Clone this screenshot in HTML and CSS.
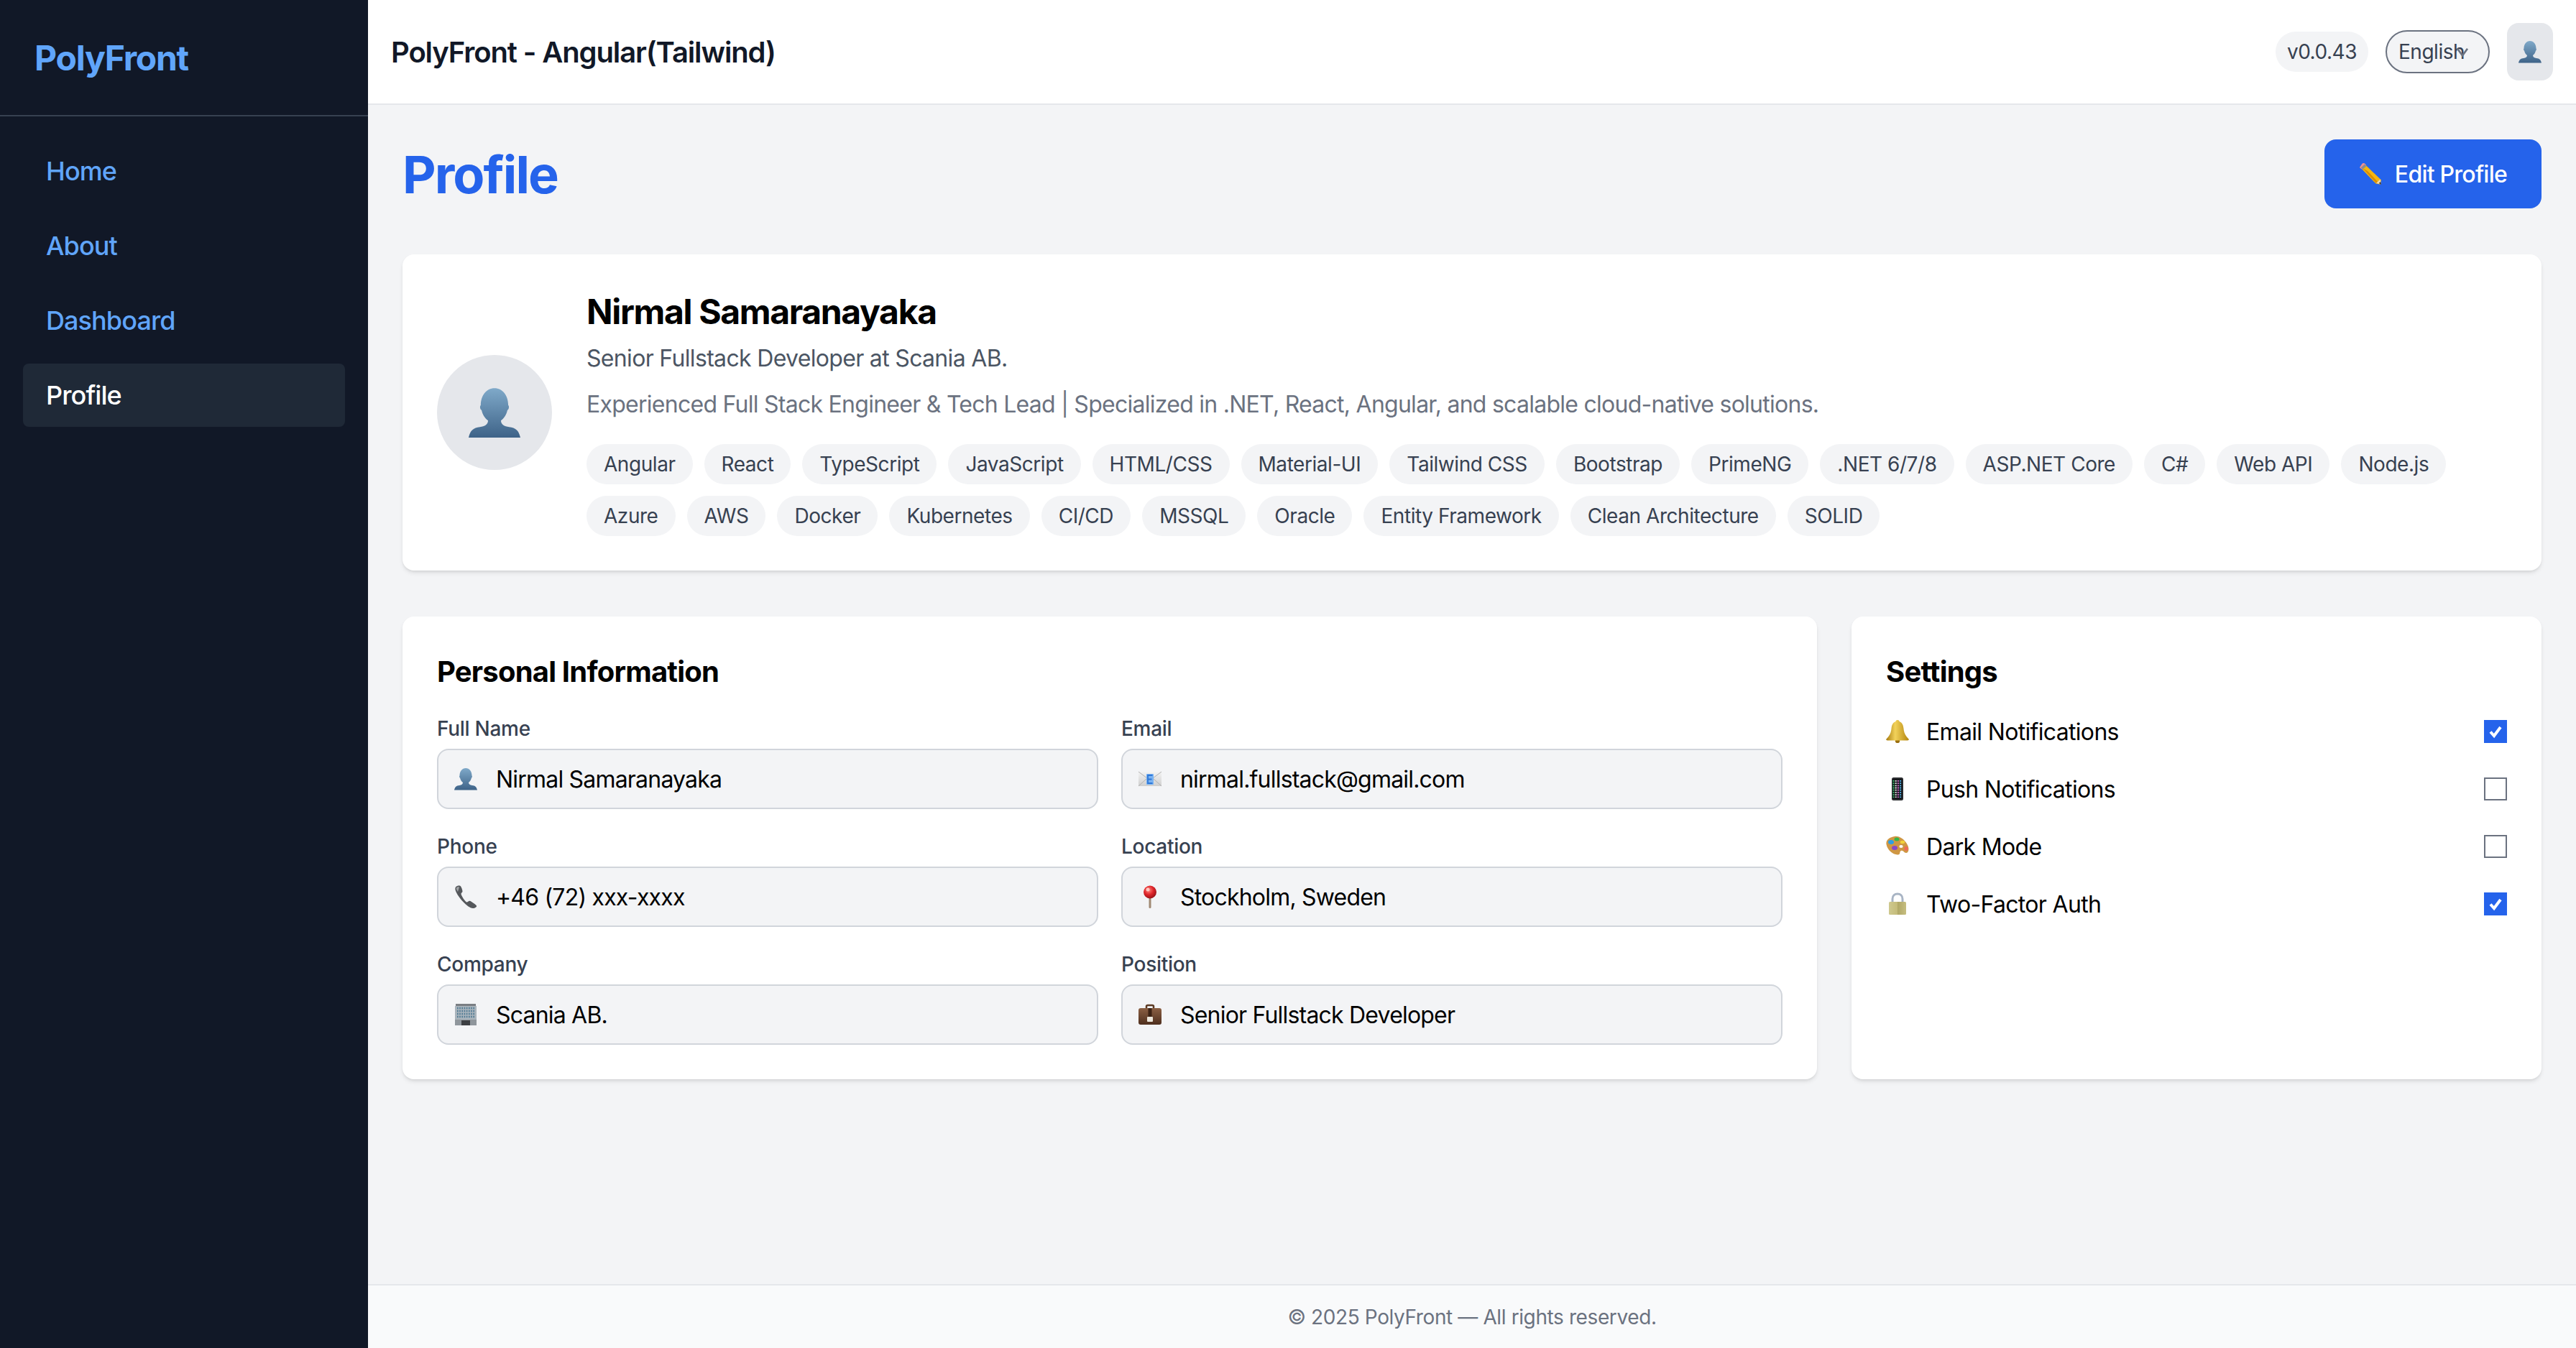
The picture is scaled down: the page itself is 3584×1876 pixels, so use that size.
FILE: index.html
```html
<!DOCTYPE html>
<html lang="en">
<head>
<meta charset="utf-8">
<title>PolyFront - Angular(Tailwind)</title>
<link rel="stylesheet" href="styles.css">
</head>
<body>
<svg class="defs" aria-hidden="true">
  <defs>
    <linearGradient id="gPerson" x1="0" y1="0" x2="0" y2="1"><stop offset="0" stop-color="#7fa9c9"/><stop offset="1" stop-color="#3e6388"/></linearGradient>
    <linearGradient id="gBell" x1="0" y1="0" x2="1" y2="0"><stop offset="0" stop-color="#a87c10"/><stop offset=".4" stop-color="#f2d25a"/><stop offset="1" stop-color="#b4860f"/></linearGradient>
    <linearGradient id="gLock" x1="0" y1="0" x2="1" y2="0"><stop offset="0" stop-color="#cfc98f"/><stop offset=".5" stop-color="#c4bb79"/><stop offset=".5" stop-color="#b0a766"/><stop offset="1" stop-color="#c6be80"/></linearGradient>
    <linearGradient id="gCase" x1="0" y1="0" x2="0" y2="1"><stop offset="0" stop-color="#8a5f43"/><stop offset="1" stop-color="#4f2f1e"/></linearGradient>
    <linearGradient id="gEnv" x1="0" y1="0" x2="0" y2="1"><stop offset="0" stop-color="#f3f3f3"/><stop offset="1" stop-color="#cfcfcf"/></linearGradient>
    <radialGradient id="gPin" cx=".4" cy=".35" r=".7"><stop offset="0" stop-color="#ff8a80"/><stop offset=".5" stop-color="#e0262b"/><stop offset="1" stop-color="#8f1015"/></radialGradient>
    <symbol id="i-person" viewBox="0 0 32 32">
      <path fill="url(#gPerson)" d="M0 31.500C1 27 3 25.500 7 25C10 24.500 12 23.500 12 21C10 19.500 8.500 17 8 14.500C7 14 6.800 12 7.500 11.500C7.500 5.500 11 1 16 1C21 1 24.500 5.500 24.500 11.500C25.200 12 25 14 24 14.500C23.500 17 22 19.500 20 21C20 23.500 22 24.500 25 25C29 25.500 31 27 32 31.500Z"/>
    </symbol>
    <symbol id="i-pencil" viewBox="0 0 32 32">
      <path fill="#f6b60f" d="M7 1.500L31 24.500L29.500 30.500L23.500 29.500L1.500 6.500Z"/>
      <path fill="#d98d06" d="M5 8L24 29L29.500 30.500L12 12Z"/>
      <path fill="#ef8f92" d="M1 7L4 2.500C5 1 7 .500 8.500 2L10 3.500L4 9.500L2 8Z"/>
      <path fill="#8d8d8d" d="M2.800 7.300L8 2.500L10.500 5L5.200 9.800Z"/>
      <path fill="#f0d9b0" d="M24 29L29.500 23.500L31 30.500Z"/>
      <path fill="#222" d="M28 29L30 27L31 31Z"/>
    </symbol>
    <symbol id="i-mail" viewBox="0 0 32 32">
      <rect x="0" y="6" width="32" height="20" fill="url(#gEnv)"/>
      <path fill="none" stroke="#b0b0b0" stroke-width="1" d="M0 6L16 18L32 6M0 26L12 15M32 26L20 15"/>
      <rect x="11" y="9" width="10" height="15" rx="1" fill="#7ab3f2"/>
      <path fill="none" stroke="#2f78d8" stroke-width="1.800" d="M19.500 11H13V22H19.500M13 16.500H18.500"/>
    </symbol>
    <symbol id="i-phone" viewBox="0 0 32 32">
      <path fill="#55585c" d="M2 2.500C4 .500 7 0 8.500 1C10 2 11.500 7 11.500 8.500C11.500 10 9.500 10.500 9.500 12C9.500 14 15 22.500 17 23.500C18.500 24 20 21.500 21.500 21.800C23.500 22.300 30 27 31 28.500C31.800 30 29 32 26 32C18 31.500 5 16 2 8C1.300 6 1 4 2 2.500Z"/>
      <path fill="#a0a3a6" d="M3 3.500C4 2.500 6 1.800 7 2.500L5 9C3.500 7 2.500 5 3 3.500Z"/>
    </symbol>
    <symbol id="i-pin" viewBox="0 0 32 32">
      <rect x="14.500" y="16" width="3" height="16" rx="1.500" fill="#a08a74"/>
      <circle cx="16" cy="9.500" r="9" fill="url(#gPin)"/>
      <circle cx="13" cy="6" r="2.500" fill="#ffc7c0"/>
    </symbol>
    <symbol id="i-building" viewBox="0 0 32 32">
      <rect x="2" y="1" width="28" height="4" fill="#7a7e83"/>
      <rect x="1" y="4" width="30" height="27" fill="#a9b4bc"/>
      <path stroke="#4f7a94" stroke-width="2.400" stroke-dasharray="1.600 1.600" fill="none" d="M4 7H28M4 11H28M4 15H28M4 19H28"/>
      <rect x="1" y="23" width="30" height="8" fill="#8f969c"/>
      <rect x="10" y="24" width="12" height="7" fill="#3c3f43"/>
    </symbol>
    <symbol id="i-case" viewBox="0 0 32 32">
      <path fill="none" stroke="#5c3a24" stroke-width="2.500" d="M11 8V4.500C11 3.500 12 3 13 3H19C20 3 21 3.500 21 4.500V8"/>
      <rect x="0" y="7" width="32" height="23" rx="3" fill="url(#gCase)"/>
      <rect x="13.500" y="7" width="5" height="12" fill="#3b2113"/>
      <rect x="12" y="19" width="8" height="7" rx="1" fill="#ece7dc"/>
    </symbol>
    <symbol id="i-bell" viewBox="0 0 32 32">
      <circle cx="16" cy="29" r="3.200" fill="#9a6f0f"/>
      <path fill="url(#gBell)" d="M16 0C18 0 18.500 1.500 18.500 2C22.500 3.500 24 7 24.500 12C25 18 27 22 31.500 26.500C32.300 27.500 31.500 28.500 30 28.500H2C.500 28.500 -.300 27.500 .500 26.500C5 22 7 18 7.500 12C8 7 9.500 3.500 13.500 2C13.500 1.500 14 0 16 0Z"/>
    </symbol>
    <symbol id="i-mobile" viewBox="0 0 32 32">
      <rect x="8" y="0" width="16" height="32" rx="2.500" fill="#2b2d30"/>
      <rect x="9.500" y="2" width="13" height="28" fill="#15171a"/>
      <path fill="none" stroke-width="2" stroke-dasharray="1.800 1.400" stroke="#35c46b" d="M10.500 4V28"/>
      <path fill="none" stroke-width="2" stroke-dasharray="1.800 1.400" stroke="#e9e9e9" d="M13.700 4V28"/>
      <path fill="none" stroke-width="2" stroke-dasharray="1.800 1.400" stroke="#d76fd2" d="M16.900 4V28"/>
      <path fill="none" stroke-width="2" stroke-dasharray="1.800 1.400" stroke="#4fb2e8" d="M20.100 4V28"/>
    </symbol>
    <symbol id="i-palette" viewBox="0 0 32 32">
      <path fill="#cf9743" d="M12 2C18 1 26 6 30 14C33 20 31 25 28 25C25 25 24 21 21 22C18 23 21 28 16 27.500C9 27 2 21 .500 13C-.500 7 5 3 12 2Z"/>
      <ellipse cx="7" cy="10" rx="4" ry="3" fill="#2c9fe6"/>
      <ellipse cx="15" cy="6" rx="3.500" ry="2.500" fill="#35b54a"/>
      <ellipse cx="23" cy="10" rx="3.200" ry="2.200" fill="#f2d23a"/>
      <ellipse cx="12" cy="18" rx="4" ry="3" fill="#8a48c6"/>
      <ellipse cx="28" cy="19" rx="2.500" ry="3" fill="#ef6a5a"/>
      <ellipse cx="21" cy="16" rx="2.600" ry="2" fill="#fff"/>
    </symbol>
    <symbol id="i-lock" viewBox="0 0 32 32">
      <path fill="none" stroke="#a8b4c4" stroke-width="3" d="M9 15V9C9 4.500 12 2 16 2C20 2 23 4.500 23 9V15"/>
      <rect x="4" y="13" width="24" height="18" rx="1.500" fill="url(#gLock)"/>
    </symbol>
  </defs>
</svg>

<div class="app">
  <aside class="sidebar">
    <div class="brand">PolyFront</div>
    <nav class="nav">
      <a class="nav-link">Home</a>
      <a class="nav-link">About</a>
      <a class="nav-link">Dashboard</a>
      <a class="nav-link is-active">Profile</a>
    </nav>
  </aside>

  <div class="shell">
    <header class="topbar">
      <div class="app-title">PolyFront - Angular(Tailwind)</div>
      <div class="topbar-tools">
        <span class="version">v0.0.43</span>
        <div class="lang">English
          <svg class="lang-chevron" viewBox="0 0 20 16"><path d="M2 2L10 13L18 2" fill="none" stroke="#6b7280" stroke-width="3"/></svg>
        </div>
        <div class="user-btn"><svg class="icon"><use href="#i-person"/></svg></div>
      </div>
    </header>

    <main class="content">
      <div class="page-head">
        <h1 class="page-title">Profile</h1>
        <button class="edit-btn"><svg class="icon"><use href="#i-pencil"/></svg><span>Edit Profile</span></button>
      </div>

      <section class="card hero">
        <div class="avatar"><svg class="avatar-icon"><use href="#i-person"/></svg></div>
        <div class="hero-info">
          <h2 class="name">Nirmal Samaranayaka</h2>
          <p class="role">Senior Fullstack Developer at Scania AB.</p>
          <p class="bio">Experienced Full Stack Engineer &amp; Tech Lead | Specialized in .NET, React, Angular, and scalable cloud-native solutions.</p>
          <div class="tags">
            <span class="tag">Angular</span><span class="tag">React</span><span class="tag">TypeScript</span><span class="tag">JavaScript</span><span class="tag">HTML/CSS</span><span class="tag">Material-UI</span><span class="tag">Tailwind CSS</span><span class="tag">Bootstrap</span><span class="tag">PrimeNG</span><span class="tag">.NET 6/7/8</span><span class="tag">ASP.NET Core</span><span class="tag">C#</span><span class="tag">Web API</span><span class="tag">Node.js</span><span class="tag">Azure</span><span class="tag">AWS</span><span class="tag">Docker</span><span class="tag">Kubernetes</span><span class="tag">CI/CD</span><span class="tag">MSSQL</span><span class="tag">Oracle</span><span class="tag">Entity Framework</span><span class="tag">Clean Architecture</span><span class="tag">SOLID</span>
          </div>
        </div>
      </section>

      <div class="columns">
        <section class="card panel">
          <h3 class="panel-title">Personal Information</h3>
          <div class="fields">
            <div class="field"><div class="field-label">Full Name</div><div class="field-box"><svg class="icon"><use href="#i-person"/></svg><span>Nirmal Samaranayaka</span></div></div>
            <div class="field"><div class="field-label">Email</div><div class="field-box"><svg class="icon"><use href="#i-mail"/></svg><span>nirmal.fullstack@gmail.com</span></div></div>
            <div class="field"><div class="field-label">Phone</div><div class="field-box"><svg class="icon"><use href="#i-phone"/></svg><span>+46 (72) xxx-xxxx</span></div></div>
            <div class="field"><div class="field-label">Location</div><div class="field-box"><svg class="icon"><use href="#i-pin"/></svg><span>Stockholm, Sweden</span></div></div>
            <div class="field"><div class="field-label">Company</div><div class="field-box"><svg class="icon"><use href="#i-building"/></svg><span>Scania AB.</span></div></div>
            <div class="field"><div class="field-label">Position</div><div class="field-box"><svg class="icon"><use href="#i-case"/></svg><span>Senior Fullstack Developer</span></div></div>
          </div>
        </section>

        <section class="card panel">
          <h3 class="panel-title">Settings</h3>
          <div class="settings">
            <div class="setting"><svg class="icon"><use href="#i-bell"/></svg><span class="setting-label">Email Notifications</span><span class="check is-on"><svg viewBox="0 0 32 32"><path d="M9 16.500L14 22L23 10" fill="none" stroke="#fff" stroke-width="4"/></svg></span></div>
            <div class="setting"><svg class="icon"><use href="#i-mobile"/></svg><span class="setting-label">Push Notifications</span><span class="check"></span></div>
            <div class="setting"><svg class="icon"><use href="#i-palette"/></svg><span class="setting-label">Dark Mode</span><span class="check"></span></div>
            <div class="setting"><svg class="icon"><use href="#i-lock"/></svg><span class="setting-label">Two-Factor Auth</span><span class="check is-on"><svg viewBox="0 0 32 32"><path d="M9 16.500L14 22L23 10" fill="none" stroke="#fff" stroke-width="4"/></svg></span></div>
          </div>
        </section>
      </div>
    </main>

    <footer class="footer">© 2025 PolyFront — All rights reserved.</footer>
  </div>
</div>
</body>
</html>
```

FILE: styles.css
```css
* { box-sizing: border-box; }
html, body { height: 100%; }
body {
  margin: 0;
  font-family: Inter, "Liberation Sans", sans-serif;
  color: #000;
  background: #f3f4f6;
  overflow: hidden;
}
h1, h2, h3, p { margin: 0; }
.defs { position: absolute; width: 0; height: 0; }
.icon { width: 32px; height: 32px; flex: none; display: block; }

.app { display: flex; height: 100%; }

/* Sidebar */
.sidebar { width: 512px; flex: none; background: #111827; }
.brand {
  height: 162px;
  padding: 0 48px;
  display: flex;
  align-items: center;
  border-bottom: 2px solid #374151;
  font-size: 48px;
  font-weight: 700;
  letter-spacing: -.026em;
  color: #60a5fa;
}
.nav { display: flex; flex-direction: column; gap: 16px; padding: 32px; }
.nav-link {
  height: 88px;
  padding: 0 32px;
  display: flex;
  align-items: center;
  border-radius: 8px;
  font-size: 36px;
  font-weight: 500;
  letter-spacing: -.025em;
  color: #60a5fa;
}
.nav-link.is-active { background: #1f2937; color: #fff; }

/* Shell */
.shell { flex: 1; min-width: 0; display: flex; flex-direction: column; }
.topbar {
  height: 146px;
  flex: none;
  padding: 0 32px;
  background: #fff;
  border-bottom: 2px solid #e5e7eb;
  display: flex;
  align-items: center;
  justify-content: space-between;
}
.app-title { font-size: 40px; font-weight: 600; letter-spacing: -.028em; color: #111827; }
.topbar-tools { display: flex; align-items: center; gap: 24px; }
.version {
  height: 56px;
  padding: 0 16px;
  display: flex;
  align-items: center;
  border-radius: 28px;
  background: #f3f4f6;
  font-size: 28px;
  letter-spacing: -.017em;
  color: #374151;
}
.lang {
  position: relative;
  width: 145px;
  height: 60px;
  padding: 0 16px;
  display: flex;
  align-items: center;
  border: 2px solid #6b7280;
  border-radius: 30px;
  background: #f3f4f6;
  font-size: 28px;
  letter-spacing: -.017em;
  color: #374151;
}
.lang-chevron { position: absolute; left: 96px; top: 22px; width: 18px; height: 14px; }
.user-btn {
  width: 64px;
  height: 80px;
  display: flex;
  align-items: center;
  justify-content: center;
  border-radius: 16px;
  background: #e5e7eb;
}

/* Content */
.content { flex: 1; min-height: 0; padding: 48px; }
.page-head { display: flex; align-items: center; justify-content: space-between; margin-bottom: 64px; }
.page-title { padding-top: 2px; font-size: 72px; line-height: 94px; font-weight: 700; letter-spacing: -.027em; color: #2563eb; }
.edit-btn {
  height: 96px;
  padding: 0 48px;
  display: flex;
  align-items: center;
  gap: 18px;
  border: 0;
  border-radius: 16px;
  background: #2563eb;
  color: #fff;
  font: 500 32px Inter, "Liberation Sans", sans-serif;
  letter-spacing: -.024em;
}

.card {
  background: #fff;
  border-radius: 16px;
  box-shadow: 0 4px 6px -1px rgba(0, 0, 0, .1), 0 2px 4px -2px rgba(0, 0, 0, .1);
}

/* Hero */
.hero { display: flex; align-items: center; gap: 48px; padding: 48px; margin-bottom: 64px; }
.avatar {
  width: 160px;
  height: 160px;
  flex: none;
  border-radius: 50%;
  background: #e5e7eb;
  display: flex;
  align-items: center;
  justify-content: center;
}
.avatar-icon { width: 72px; height: 72px; }
.hero-info { flex: 1; min-width: 0; }
.name { font-size: 48px; line-height: 64px; font-weight: 700; letter-spacing: -.028em; }
.role { margin-top: 9px; font-size: 32px; line-height: 48px; letter-spacing: -.021em; color: #4b5563; }
.bio { margin-top: 16px; font-size: 32px; line-height: 48px; letter-spacing: -.023em; color: #6b7280; }
.tags { display: flex; flex-wrap: wrap; gap: 16px; margin-top: 31px; }
.tag {
  height: 56px;
  padding: 0 24px;
  display: flex;
  align-items: center;
  border-radius: 28px;
  background: #f3f4f6;
  font-size: 28px;
  letter-spacing: -.016em;
  color: #374151;
}

/* Panels */
.columns { display: grid; grid-template-columns: 1fr 960px; gap: 48px; }
.panel { padding: 48px; min-width: 0; }
.panel-title { padding-top: 1px; font-size: 40px; line-height: 56px; font-weight: 700; letter-spacing: -.02em; margin-bottom: 31px; }
.fields { display: grid; grid-template-columns: 1fr 1fr; gap: 32px; }
.field-label { font-size: 28px; line-height: 40px; font-weight: 500; letter-spacing: -.01em; color: #374151; margin-bottom: 8px; }
.field-box {
  height: 84px;
  padding: 0 22px;
  display: flex;
  align-items: center;
  gap: 26px;
  border: 2px solid #d1d5db;
  border-radius: 16px;
  background: #f3f4f6;
  font-size: 32px;
  letter-spacing: -.025em;
  color: #000;
}

.settings { display: flex; flex-direction: column; gap: 32px; }
.setting { height: 48px; display: flex; align-items: center; gap: 24px; font-size: 32px; letter-spacing: -.021em; }
.setting-label { flex: 1; }
.check {
  width: 32px;
  height: 32px;
  flex: none;
  border: 2px solid #6b7280;
  background: #fff;
}
.check svg { display: block; width: 100%; height: 100%; }
.check.is-on { border: 0; background: #2563eb; }

/* Footer */
.footer {
  height: 89px;
  flex: none;
  display: flex;
  align-items: center;
  justify-content: center;
  border-top: 2px solid #e5e7eb;
  background: #f9fafb;
  font-size: 28px;
  letter-spacing: -.014em;
  color: #6b7280;
}
```
